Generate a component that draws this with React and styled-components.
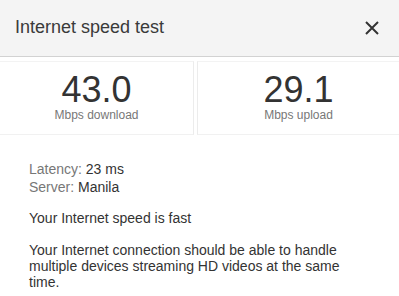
import React from "react";
import styled, { createGlobalStyle } from "styled-components";

const Global = createGlobalStyle`
  html, body { margin: 0; padding: 0; background: #ffffff; }
  body { font-family: "Liberation Sans", Arial, sans-serif; }
  * { box-sizing: border-box; }
`;

const Panel = styled.div`
  width: 399px;
  height: 296px;
  background: #fff;
  overflow: hidden;
`;

const Header = styled.div`
  height: 57px;
  background: #f4f4f4;
  border-bottom: 1px solid #d2d2d2;
  display: flex;
  align-items: center;
  justify-content: space-between;
  padding: 0 20px 0 15px;
`;

const Title = styled.div`
  font-size: 18px;
  color: #3a3a3a;
  padding-bottom: 1px;
`;

const CloseButton = styled.button`
  border: 0;
  background: transparent;
  padding: 0;
  width: 14px;
  height: 14px;
  display: flex;
  cursor: pointer;
`;

const StatsRow = styled.div`
  display: flex;
  justify-content: space-between;
  padding-top: 4px;
`;

const StatCard = styled.div`
  width: ${(p) => p.$w}px;
  border-top: 1px solid #f3f3f3;
  border-bottom: 1px solid #f1f1f1;
  border-${(p) => p.$side}: 1px solid #ececec;
  padding: 10px 0 12px;
  display: flex;
  flex-direction: column;
  align-items: center;
`;

const Value = styled.div`
  font-size: 36px;
  line-height: 36px;
  color: #333;
`;

const Unit = styled.div`
  font-size: 12px;
  line-height: 14px;
  color: #777;
`;

const Details = styled.div`
  padding: 25px 40px 0 29px;
  font-size: 14px;
  color: #333;
`;

const InfoLine = styled.div`
  line-height: 18px;
`;

const Label = styled.span`
  color: #777;
`;

const Para = styled.p`
  margin: ${(p) => p.$mt}px 0 0;
  line-height: 16px;
  color: #333;
`;

export default function App() {
  return (
    <Panel>
      <Global />
      <Header>
        <Title>Internet speed test</Title>
        <CloseButton aria-label="Close">
          <svg width="14" height="14" viewBox="0 0 14 14">
            <path d="M1 1L13 13M13 1L1 13" stroke="#333" strokeWidth="2" fill="none" />
          </svg>
        </CloseButton>
      </Header>
      <StatsRow>
        <StatCard $w={194} $side="right">
          <Value>43.0</Value>
          <Unit>Mbps download</Unit>
        </StatCard>
        <StatCard $w={202} $side="left">
          <Value>29.1</Value>
          <Unit>Mbps upload</Unit>
        </StatCard>
      </StatsRow>
      <Details>
        <InfoLine>
          <Label>Latency:</Label> 23 ms
        </InfoLine>
        <InfoLine>
          <Label>Server:</Label> Manila
        </InfoLine>
        <Para $mt={14}>Your Internet speed is fast</Para>
        <Para $mt={16}>
          Your Internet connection should be able to handle multiple devices streaming HD videos at the same time.
        </Para>
      </Details>
    </Panel>
  );
}
